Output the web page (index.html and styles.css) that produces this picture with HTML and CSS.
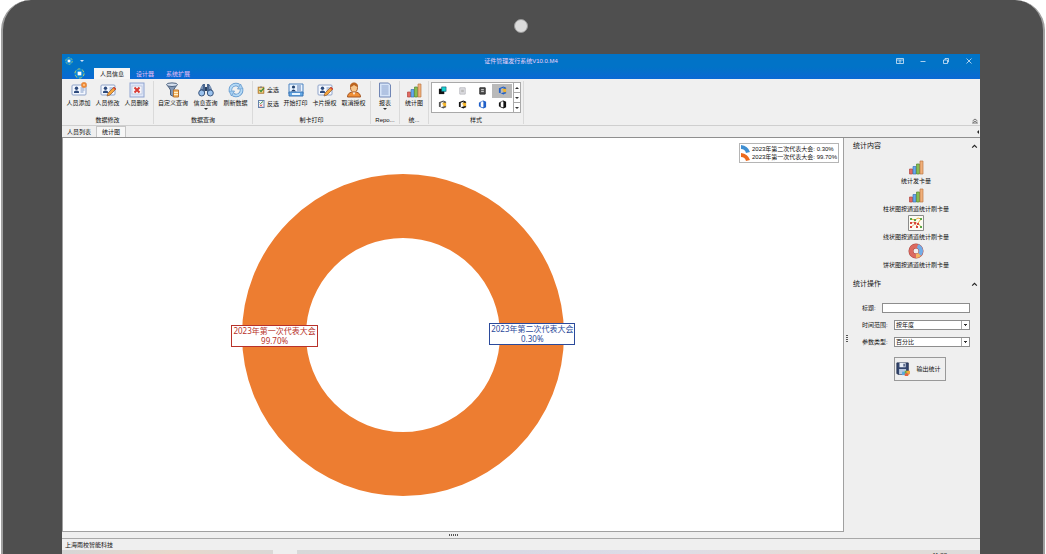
FILE: index.html
```html
<!DOCTYPE html>
<html lang="zh-CN">
<head>
  <meta charset="UTF-8" />
  <meta name="viewport" content="width=device-width, initial-scale=1.0"/>
  <title>证件管理发行系统V10.0.M4</title>
  <link rel="stylesheet" href="styles.css">
</head>
<body>

  <!-- Shared icons -->
  <svg class="sprite" aria-hidden="true">
    <symbol id="card" viewBox="0 0 16 16">
      <rect x="1" y="3" width="14" height="10" rx="1" fill="#f4f8ff" stroke="#8fa3c8"/>
      <circle cx="5.500" cy="6.200" r="1.700" fill="#2d4a7c"/>
      <path d="M3 11V9.500Q5.500 7.500 8 9.500V11z" fill="#2d4a7c"/>
      <path d="M9.500 6h4M9.500 8h4M9.500 10h3" stroke="#7f98c4"/>
    </symbol>
    <symbol id="card-add" viewBox="0 0 16 16">
      <use href="#card"/>
      <circle cx="13" cy="3" r="2.700" fill="#f08a35" stroke="#d9884a" stroke-width=".5"/>
      <path d="M13 2v2M12 3h2" stroke="#ffd9a8" stroke-width=".8"/>
    </symbol>
    <symbol id="card-edit" viewBox="0 0 16 16">
      <use href="#card"/>
      <path d="M7 14l1-3 6-6 2 2-6 6z" fill="#f6a53a" stroke="#8c5630" stroke-width=".7"/>
      <path d="M13 6l1-1 2 2-1 1z" fill="#d9443c"/>
    </symbol>
    <symbol id="card-del" viewBox="0 0 16 16">
      <rect x="1" y="1" width="14" height="14" fill="#dfe7f8" stroke="#8fa3d0"/>
      <rect x="3" y="4" width="10" height="8" fill="#f6f6fb" stroke="#a9b6d3" stroke-width=".6"/>
      <path d="M5.500 5.500l5 5M10.500 5.500l-5 5" stroke="#d83a34" stroke-width="2"/>
    </symbol>
    <symbol id="filter" viewBox="0 0 16 16">
      <path d="M2 2.500L5.500 8v5l3 1.500V8L12 2.500z" fill="#8498b4" stroke="#4d6280"/>
      <ellipse cx="7" cy="2.700" rx="5.500" ry="1.800" fill="#d6e0ee" stroke="#4d6280"/>
      <path d="M8.500 8h5v7h-5z" fill="#f5b764" stroke="#bd7630"/>
      <path d="M9 10.500h4M9 12.500h4" stroke="#fff0cb"/>
    </symbol>
    <symbol id="binoculars" viewBox="0 0 16 16">
      <path d="M3 5l2-3h2v9H1zM13 5l-2-3H9v9h6z" fill="#49668f"/>
      <path d="M7 5h2v4H7z" fill="#29405f"/>
      <circle cx="3.700" cy="11" r="3" fill="#9ac2ee" stroke="#3a567e"/>
      <circle cx="12.300" cy="11" r="3" fill="#9ac2ee" stroke="#3a567e"/>
      <path d="M4 4v3M12 4v3" stroke="#a9bedb"/>
    </symbol>
    <symbol id="refresh" viewBox="0 0 16 16">
      <path d="M2.500 9A5.500 5.500 0 0 1 11 3.500M13.500 7A5.500 5.500 0 0 1 5 12.500" fill="none" stroke="#568fc8" stroke-width="3.400"/>
      <path d="M9.500 7H15L12.500 2zM6.500 9H1l2.500 5z" fill="#a6d0f2" stroke="#568fc8" stroke-width=".7"/>
      <path d="M2.500 9A5.500 5.500 0 0 1 11 3.500M13.500 7A5.500 5.500 0 0 1 5 12.500" fill="none" stroke="#b5daf6" stroke-width="2"/>
    </symbol>
    <symbol id="select-all" viewBox="0 0 16 16">
      <rect x="2" y="2" width="12" height="13" fill="#d6a04a" stroke="#9b6a2d"/>
      <rect x="4" y="4" width="8" height="9" fill="#f3d894"/>
      <path d="M5 8l3 3 6-7" fill="none" stroke="#438b3b" stroke-width="2.500"/>
      <path d="M6 1h4v3H6z" fill="#8a8a8a"/>
    </symbol>
    <symbol id="select-inv" viewBox="0 0 16 16">
      <rect x="3" y="1" width="11" height="14" fill="#f3f7ff" stroke="#6582ad" stroke-width="2"/>
      <path d="M5 5l2 2 5-4" fill="none" stroke="#438b3b" stroke-width="2"/>
      <path d="M6 9l4 4M10 9l-4 4" stroke="#d4453d" stroke-width="2"/>
    </symbol>
    <symbol id="print-card" viewBox="0 0 16 16">
      <path d="M1 2h14v10H1z" fill="#eaf4ff" stroke="#4d83c0"/>
      <circle cx="5.500" cy="5" r="1.600" fill="#24436f"/>
      <path d="M3 9.500Q5.500 5.500 8 9.500z" fill="#24436f"/>
      <path d="M9 4h4M9 6h4M9 8h4" stroke="#5c7fb5"/>
      <path d="M1 10h14v4H1z" fill="#65a9e6" stroke="#3a75b4"/>
      <path d="M4 12h8" stroke="#e7f5ff" stroke-width="2"/>
    </symbol>
    <symbol id="user" viewBox="0 0 16 16">
      <path d="M1.500 15q0-4 4.500-5h4q4.500 1 4.500 5z" fill="#ef8e36" stroke="#a35523"/>
      <path d="M6 9h4l-2 4z" fill="#fff"/>
      <ellipse cx="8" cy="5.500" rx="3.500" ry="4.500" fill="#f7c68b" stroke="#a85e2d"/>
      <path d="M4.300 5Q3.700 1 8 .7 12.300 1 11.700 5 9 4 8 3 6 5 4.300 5z" fill="#bc641f"/>
    </symbol>
    <symbol id="report" viewBox="0 0 16 16">
      <path d="M2.500 1h9l2 2v12h-11z" fill="#d6e4f8" stroke="#7186b5"/>
      <path d="M4.500 4h7M4.500 6h7M4.500 8h7M4.500 10h7M4.500 12h7" stroke="#8da3cd"/>
    </symbol>
    <symbol id="bars" viewBox="0 0 16 16">
      <path d="M1.500 10h3v5h-3z" fill="#e06a62" stroke="#b4453e" stroke-width=".7"/>
      <path d="M5 7.500h3V15H5z" fill="#68a9ec" stroke="#3c73b4" stroke-width=".7"/>
      <path d="M8.500 5h3v10h-3z" fill="#86bd52" stroke="#55852c" stroke-width=".7"/>
      <path d="M12 2h3v13h-3z" fill="#f0b07a" stroke="#bd7946" stroke-width=".7"/>
    </symbol>
    <symbol id="lines" viewBox="0 0 16 16">
      <path d="M.5.500h15v15H.5z" fill="#fcfbf3" stroke="#8b8b8b"/>
      <path d="M3 4l4 1 3-2 3 1-3 4 3 4" fill="none" stroke="#e7b03a"/>
      <path d="M3 8l4-1 3 2M3 12l4-3 2 2" fill="none" stroke="#e08a5c" stroke-width=".8"/>
      <path d="M2 3h2v2H2zM6 4h2v2H6zM12 3h2v2h-2zM12 11h2v2h-2z" fill="#5aa648"/>
      <path d="M2 7h2v2H2zM6 7h2v2H6zM9 8h2v2H9zM2 11h2v2H2zM8 11h2v2H8z" fill="#d9453a"/>
    </symbol>
    <symbol id="ring" viewBox="0 0 16 16">
      <circle cx="8" cy="8" r="5" fill="none" stroke="#a9443e" stroke-width="5"/>
      <circle cx="8" cy="8" r="5" fill="none" stroke="#dc6a60" stroke-width="4"/>
      <path d="M9.500 3.200A5 5 0 0 1 11.500 11.500" fill="none" stroke="#71ade9" stroke-width="4"/>
      <path d="M11.500 11.500A5 5 0 0 1 8 13" fill="none" stroke="#f2b763" stroke-width="4"/>
    </symbol>
    <symbol id="save" viewBox="0 0 16 16">
      <path d="M1 1h13v13H2l-1-1z" fill="#34466f" stroke="#22304f"/>
      <path d="M4 1h7v5H4z" fill="#e7edf6"/>
      <path d="M8.500 2h1.500v3H8.500z" fill="#34466f"/>
      <path d="M3.500 8h8v6h-8z" fill="#b8c8df"/>
      <path d="M7 11h4v4H7z" fill="#55a8e0"/>
      <path d="M10 10h3v3h-3z" fill="#6aae47"/>
      <path d="M12 10h4v4h-4z" fill="#f3a63a"/>
      <path d="M10 13h4v3h-4z" fill="#e6643e"/>
    </symbol>
    <symbol id="office" viewBox="0 0 10 10">
      <path d="M4 1L1 3v4l3 2V7.500H3v-5h1z" fill="currentColor"/>
      <path d="M4 1l2-.5L9 2v6L6 9.500 3 8h3V2z" fill="currentColor"/>
    </symbol>
    <symbol id="office-gold" viewBox="0 0 10 10">
      <path d="M6 .5L1 2.500v5l2 .5V3l3-1zM3 8l3 1.500L7 9V7z" fill="currentColor"/>
      <path d="M6 .5L9 2v2H6zM6 6h3v2L7 9z" fill="currentColor"/>
      <path d="M5 3h4v4H6V5H5z" fill="#f3b52b"/>
    </symbol>
    <symbol id="logo" viewBox="0 0 12 12">
      <circle cx="6" cy="6" r="5" fill="#0b86d8" stroke="#12a5e8" stroke-width=".6"/>
      <circle cx="6" cy="6" r="5" fill="none" stroke="#c9cf55" stroke-dasharray="3 2.200"/>
      <path d="M4 4h4v4H4z" fill="#fff"/>
    </symbol>
  </svg>

  <div class="tablet">
    <div class="camera"></div>

    <div class="screen">

      <!-- Title bar -->
      <header class="titlebar">
        <div class="quick">
          <svg class="logo-small"><use href="#logo"/></svg>
          <span class="caret light"></span>
        </div>
        <h1>证件管理发行系统V10.0.M4</h1>
        <div class="window-buttons">
          <button aria-label="功能区"><svg viewBox="0 0 8 8"><path d="M.5 1.500h7v5h-7zM.5 3h7M4 6V3.500M3 4.500l1-1 1 1"/></svg></button>
          <button aria-label="最小化"><svg viewBox="0 0 8 8"><path d="M1.500 4.500h5"/></svg></button>
          <button aria-label="还原"><svg viewBox="0 0 8 8"><path d="M1.500 3h4v3.500h-4zM3 3V1.500h3.500V5H5.500"/></svg></button>
          <button aria-label="关闭"><svg viewBox="0 0 8 8"><path d="M1.500 1.500l5 5M6.500 1.500l-5 5"/></svg></button>
        </div>
      </header>
      <nav class="menu">
        <button class="app-button" aria-label="菜单"><svg><use href="#logo"/></svg></button>
        <button class="active">人员信息</button>
        <button>设计器</button>
        <button>系统扩展</button>
      </nav>

      <!-- Ribbon -->
      <div class="ribbon">
        <section class="group">
          <div class="tools">
            <button class="tool"><svg><use href="#card-add"/></svg>人员添加</button>
            <button class="tool"><svg><use href="#card-edit"/></svg>人员修改</button>
            <button class="tool"><svg><use href="#card-del"/></svg>人员删除</button>
          </div>
          <h2>数据修改</h2>
        </section>
        <section class="group">
          <div class="tools spaced">
            <button class="tool wide"><svg><use href="#filter"/></svg>自定义查询</button>
            <button class="tool"><svg><use href="#binoculars"/></svg>信息查询<span class="caret"></span></button>
            <button class="tool"><svg><use href="#refresh"/></svg>刷新数据</button>
          </div>
          <h2>数据查询</h2>
        </section>
        <section class="group">
          <div class="tools">
            <div class="small-tools">
              <button><svg><use href="#select-all"/></svg>全选</button>
              <button><svg><use href="#select-inv"/></svg>反选</button>
            </div>
            <button class="tool"><svg><use href="#print-card"/></svg>开始打印</button>
            <button class="tool"><svg><use href="#card-edit"/></svg>卡片授权</button>
            <button class="tool"><svg><use href="#user"/></svg>取消授权</button>
          </div>
          <h2>制卡打印</h2>
        </section>
        <section class="group">
          <div class="tools">
            <button class="tool narrow"><svg><use href="#report"/></svg>报表<span class="caret"></span></button>
          </div>
          <h2>Repo...</h2>
        </section>
        <section class="group">
          <div class="tools">
            <button class="tool narrow"><svg><use href="#bars"/></svg>统计图</button>
          </div>
          <h2>统...</h2>
        </section>
        <section class="group">
          <div class="gallery">
            <div class="swatches">
              <button aria-label="样式 1"><svg viewBox="0 0 10 10"><path d="M1 3h6v6H1z" fill="#111"/><path d="M4 1h5v5H4z" fill="#19d3cf" stroke="#146" stroke-width=".6"/></svg></button>
              <button aria-label="样式 2"><svg viewBox="0 0 10 10"><path d="M2 2h6v7H2z" fill="#e2e2e6" stroke="#b9b9c0"/><path d="M3.500 4h3v3h-3z" fill="#bbb"/></svg></button>
              <button aria-label="样式 3"><svg viewBox="0 0 10 10"><path d="M2 2h6v7H2z" fill="#555" stroke="#222"/><path d="M3.500 4h3M3.500 6h3" stroke="#ddd"/></svg></button>
              <button aria-label="样式 4" class="selected blue"><svg><use href="#office-gold"/></svg></button>
              <button aria-label="样式 5" class="grey"><svg><use href="#office-gold"/></svg></button>
              <button aria-label="样式 6"><svg><use href="#office-gold"/></svg></button>
              <button aria-label="样式 7" class="blue"><svg><use href="#office"/></svg></button>
              <button aria-label="样式 8"><svg><use href="#office"/></svg></button>
            </div>
            <div class="scroller">
              <button aria-label="上"><span class="caret up"></span></button>
              <button aria-label="下"><span class="caret"></span></button>
              <button aria-label="更多"><span class="caret more"></span></button>
            </div>
          </div>
          <h2>样式</h2>
        </section>
        <button class="collapse" aria-label="折叠"><svg viewBox="0 0 6 6"><path d="M.5 3L3 1l2.500 2M.5 5L3 3l2.500 2z"/></svg></button>
      </div>

      <!-- Page tabs -->
      <div class="page-tabs">
        <button>人员列表</button>
        <button class="active">统计图</button>
        <span class="tab-scroll"></span>
      </div>

      <main class="workspace">
        <!-- Chart -->
        <div class="chart">
          <div class="plot">
            <div class="donut">
              <svg viewBox="0 0 322 322">
                <circle cx="161" cy="161" r="129" fill="none" stroke="#ed7d31" stroke-width="64"/>
                <path d="M258 161h64" stroke="#3f8fd2"/>
              </svg>
              <div class="label first">2023年第一次代表大会<br>99.70%</div>
              <div class="label second">2023年第二次代表大会<br>0.30%</div>
            </div>
          </div>
          <ul class="legend">
            <li><svg viewBox="0 0 9 8"><path d="M0 0Q7 1 9 7L5 8Q4 4 0 4z" fill="#3f8fd2"/></svg>2023年第二次代表大会: 0.30%</li>
            <li><svg viewBox="0 0 9 8"><path d="M0 0Q7 1 9 7L5 8Q4 4 0 4z" fill="#ec6a1e"/></svg>2023年第一次代表大会: 99.70%</li>
          </ul>
        </div>

        <!-- Side panel -->
        <div class="grip"></div>
        <aside class="side">
          <h3>统计内容<svg viewBox="0 0 6 6"><path d="M1 4l2-2 2 2"/></svg></h3>
          <div class="reports">
            <button><svg><use href="#bars"/></svg>统计发卡量</button>
            <button><svg><use href="#bars"/></svg>柱状图按通道统计刷卡量</button>
            <button><svg><use href="#lines"/></svg>线状图按通道统计刷卡量</button>
            <button><svg><use href="#ring"/></svg>饼状图按通道统计刷卡量</button>
          </div>
          <h3>统计操作<svg viewBox="0 0 6 6"><path d="M1 4l2-2 2 2"/></svg></h3>
          <form class="options">
            <div class="field title-field">
              <label for="title">标题:</label>
              <input type="text" id="title">
            </div>
            <div class="field">
              <label for="range">时间范围:</label>
              <select id="range"><option>按年度</option></select>
            </div>
            <div class="field">
              <label for="kind">参数类型:</label>
              <select id="kind"><option>百分比</option></select>
            </div>
            <button type="button" class="export"><svg><use href="#save"/></svg>输出统计</button>
          </form>
        </aside>
      </main>

      <div class="splitter"><span class="dots"></span></div>
      <footer class="status">上海雨校智能科技</footer>
      <div class="taskbar"><span class="search"></span><span class="clock">11:22</span></div>
    </div>
  </div>

</body>
</html>
```

FILE: styles.css
```css
* {
  box-sizing: border-box;
}
body {
  margin: 0;
  height: 100vh;
  overflow: hidden;
  background: #fff;
  color: #111;
  font-family: "Liberation Sans", "Noto Sans CJK SC", sans-serif;
  font-size: 6px;
  line-height: 8px;
}
h1, h2, h3, ul {
  margin: 0;
  padding: 0;
  font-size: 6px;
  font-weight: normal;
}
button {
  display: flex;
  align-items: center;
  justify-content: center;
  margin: 0;
  padding: 0;
  border: none;
  background: none;
  color: inherit;
  font: inherit;
  white-space: nowrap;
}
svg {
  display: block;
  flex: none;
}
.sprite {
  position: absolute;
  width: 0;
  height: 0;
}

/* Tablet frame */
.tablet {
  display: flex;
  flex-direction: column;
  align-items: stretch;
  height: 100vh;
  margin: 0 1px;
  padding: 0 63px 0 59px;
  background: #4f4f4f;
  border: solid #a0a0a0;
  border-width: 0 2px;
  border-radius: 30px 30px 0 0;
}
.camera {
  flex: none;
  align-self: center;
  width: 14px;
  height: 14px;
  margin: 19px 0 21px;
  border: 1px solid #999;
  border-radius: 50%;
  background: #dcdcdc;
}
.screen {
  flex: 1;
  min-height: 0;
  display: flex;
  flex-direction: column;
  background: #efefef;
}

/* Title bar */
.titlebar {
  display: grid;
  grid-template-columns: 1fr auto 1fr;
  align-items: center;
  height: 13px;
  background: #0173c7;
  color: #ecd2fa;
}
.quick {
  display: flex;
  align-items: center;
  gap: 7px;
  padding-left: 3px;
}
.logo-small {
  width: 8px;
  height: 8px;
}
.window-buttons {
  display: flex;
  justify-content: flex-end;
}
.window-buttons button {
  width: 23px;
}
.window-buttons svg {
  width: 8px;
  height: 8px;
  fill: none;
  stroke: #d5e8f8;
  stroke-width: 0.8;
}
.caret {
  border: solid transparent;
  border-width: 2px 2px 0;
  border-top-color: #333;
}
.caret.light {
  border-top-color: #cfe0f5;
}
.caret.up {
  border-width: 0 2px 2px;
  border-bottom-color: #333;
}
.menu {
  display: flex;
  height: 12px;
  padding-left: 5px;
  background: linear-gradient(#0173c7, #0a68d4);
  color: #e8bdf7;
}
.menu button {
  align-self: flex-end;
  height: 11px;
  padding: 0 6px;
}
.menu .app-button {
  width: 24px;
  margin-right: 3px;
  padding: 0;
}
.app-button svg {
  width: 11px;
  height: 11px;
}
.menu .active {
  background: #f5f5f5;
  color: #111;
}

/* Ribbon */
.ribbon {
  display: flex;
  height: 47px;
  padding: 2px 0 1px;
  background: #f0f0f0;
  border-bottom: 1px solid #cfcfcf;
}
.group {
  display: flex;
  flex-direction: column;
  justify-content: space-between;
  align-items: center;
  padding: 1px 2px 0;
  border-right: 1px solid #dadada;
}
.tools {
  display: flex;
}
.tools.spaced {
  gap: 1px;
}
.tool {
  flex-direction: column;
  justify-content: flex-start;
  width: 29px;
}
.tool.wide {
  width: 34px;
}
.tool.narrow {
  width: 24px;
}
.tool svg {
  width: 16px;
  height: 16px;
  margin-bottom: 1px;
}
.tool .caret {
  margin-top: 1px;
}
.small-tools {
  display: flex;
  flex-direction: column;
  gap: 6px;
  width: 26px;
  padding: 4px 0 0 2px;
}
.small-tools button {
  justify-content: flex-start;
  gap: 2px;
}
.small-tools svg {
  width: 8px;
  height: 8px;
}
.gallery {
  display: flex;
  width: 90px;
  height: 31px;
  border: 1px solid #a9a9a9;
  background: #fff;
}
.swatches {
  flex: 1;
  display: grid;
  grid-template-columns: repeat(4, 1fr);
  padding: 1px;
}
.swatches svg {
  width: 9px;
  height: 9px;
}
.swatches .selected {
  background: #b9b9b9;
}
.blue {
  color: #1f5fc8;
}
.grey {
  color: #555;
}
.scroller {
  display: flex;
  flex-direction: column;
  width: 7px;
}
.scroller button {
  flex: 1;
  border-left: 1px solid #a9a9a9;
}
.scroller button + button {
  border-top: 1px solid #a9a9a9;
}
.collapse {
  align-self: flex-end;
  margin: 0 2px 0 auto;
}
.collapse svg {
  width: 6px;
  height: 6px;
  fill: none;
  stroke: #555;
  stroke-width: 0.8;
}

/* Page tabs */
.page-tabs {
  display: flex;
  height: 12px;
  padding-right: 1px;
  border-bottom: 1px solid #8f8f8f;
}
.page-tabs button {
  padding: 0 5px;
}
.page-tabs .active {
  border: 1px solid #c6c6c6;
  border-bottom: none;
  background: #f7f7f7;
}
.tab-scroll {
  align-self: center;
  margin-left: auto;
  border: solid transparent;
  border-width: 2px 2px 2px 0;
  border-right-color: #222;
}

/* Chart */
.workspace {
  flex: 1;
  min-height: 0;
  display: flex;
}
.chart {
  flex: 1;
  display: flex;
  align-items: flex-start;
  padding-right: 4px;
  background: #fff;
  border: solid #a0a0a0;
  border-width: 0 1px 1px;
}
.plot {
  flex: 1;
  align-self: center;
  display: flex;
  justify-content: center;
  padding-left: 5px;
}
.donut {
  position: relative;
  width: 322px;
}
.label {
  position: absolute;
  padding: 0 1px;
  border: 1px solid currentColor;
  background: #fff;
  font-family: "Noto Sans", "Noto Sans CJK SC", sans-serif;
  font-size: 8px;
  line-height: 10px;
  text-align: center;
  white-space: nowrap;
}
.label.first {
  top: 151px;
  left: -11px;
  color: #b8322a;
}
.label.second {
  top: 149px;
  right: -11px;
  color: #2b4a9b;
}
.legend {
  margin-top: 5px;
  padding: 1px;
  border: 1px solid #b5b5b5;
  list-style: none;
  white-space: nowrap;
}
.legend li {
  display: flex;
  align-items: center;
  gap: 2px;
}
.legend svg {
  width: 9px;
  height: 8px;
}

/* Side panel */
.grip {
  align-self: center;
  width: 2px;
  height: 8px;
  margin: 8px 0 0 2px;
  background: repeating-linear-gradient(#555 0 1px, transparent 1px 2px);
}
.side {
  width: 132px;
  padding: 3px 5px 0;
}
.side h3 {
  display: flex;
  justify-content: space-between;
  align-items: center;
  height: 10px;
  font-size: 7px;
}
.side h3 svg {
  width: 7px;
  height: 7px;
  margin-right: -3px;
  fill: none;
  stroke: #222;
}
.reports {
  display: flex;
  flex-direction: column;
  gap: 2px;
  padding: 8px 0 10px 4px;
}
.reports button {
  flex-direction: column;
  gap: 2px;
}
.reports svg {
  width: 16px;
  height: 16px;
}
.options {
  display: flex;
  flex-direction: column;
  gap: 7px;
  padding: 14px 5px 0 9px;
}
.field {
  display: flex;
  align-items: center;
}
.field label {
  width: 32px;
}
.title-field label {
  width: 20px;
}
.field input, .field select {
  flex: 1;
  min-width: 0;
  height: 10px;
  margin: 0;
  padding: 0 1px;
  border: 1px solid #8d8d8d;
  border-radius: 0;
  background: #fff;
  color: #111;
  font: inherit;
}
.field select {
  appearance: none;
  background: linear-gradient(#333, #333) right 3px top 4px / 1px 1px no-repeat,
    linear-gradient(#333, #333) right 2px top 3px / 3px 1px no-repeat,
    linear-gradient(#aaa, #aaa) right 7px center / 1px 100% no-repeat,
    #fff;
}
.export {
  width: 52px;
  height: 24px;
  margin: 3px 0 0 32px;
  gap: 6px;
  padding-right: 3px;
  border: 1px solid #999;
}
.export svg {
  width: 14px;
  height: 14px;
}

/* Bottom bars */
.splitter {
  display: flex;
  align-items: center;
  height: 7px;
  justify-content: center;
  padding-right: 136px;
  border-bottom: 1px solid #a8a8a8;
}
.dots {
  width: 9px;
  height: 2px;
  background: repeating-linear-gradient(90deg, #555 0 1px, transparent 1px 2px);
}
.status {
  height: 11px;
  padding: 2px 3px 0;
}
.taskbar {
  display: flex;
  justify-content: space-between;
  height: 4px;
  background: linear-gradient(90deg, #d6d6d6, #e8d8cc 12%, #d8d8d8 25%, #d9d9e4 50%, #dddde8 65%, #e6dcd4 85%, #dcdcdc);
}
.search {
  width: 24px;
  margin-left: 23%;
  background: #efefef;
}
.clock {
  padding: 1px 33px 0 0;
}
```
